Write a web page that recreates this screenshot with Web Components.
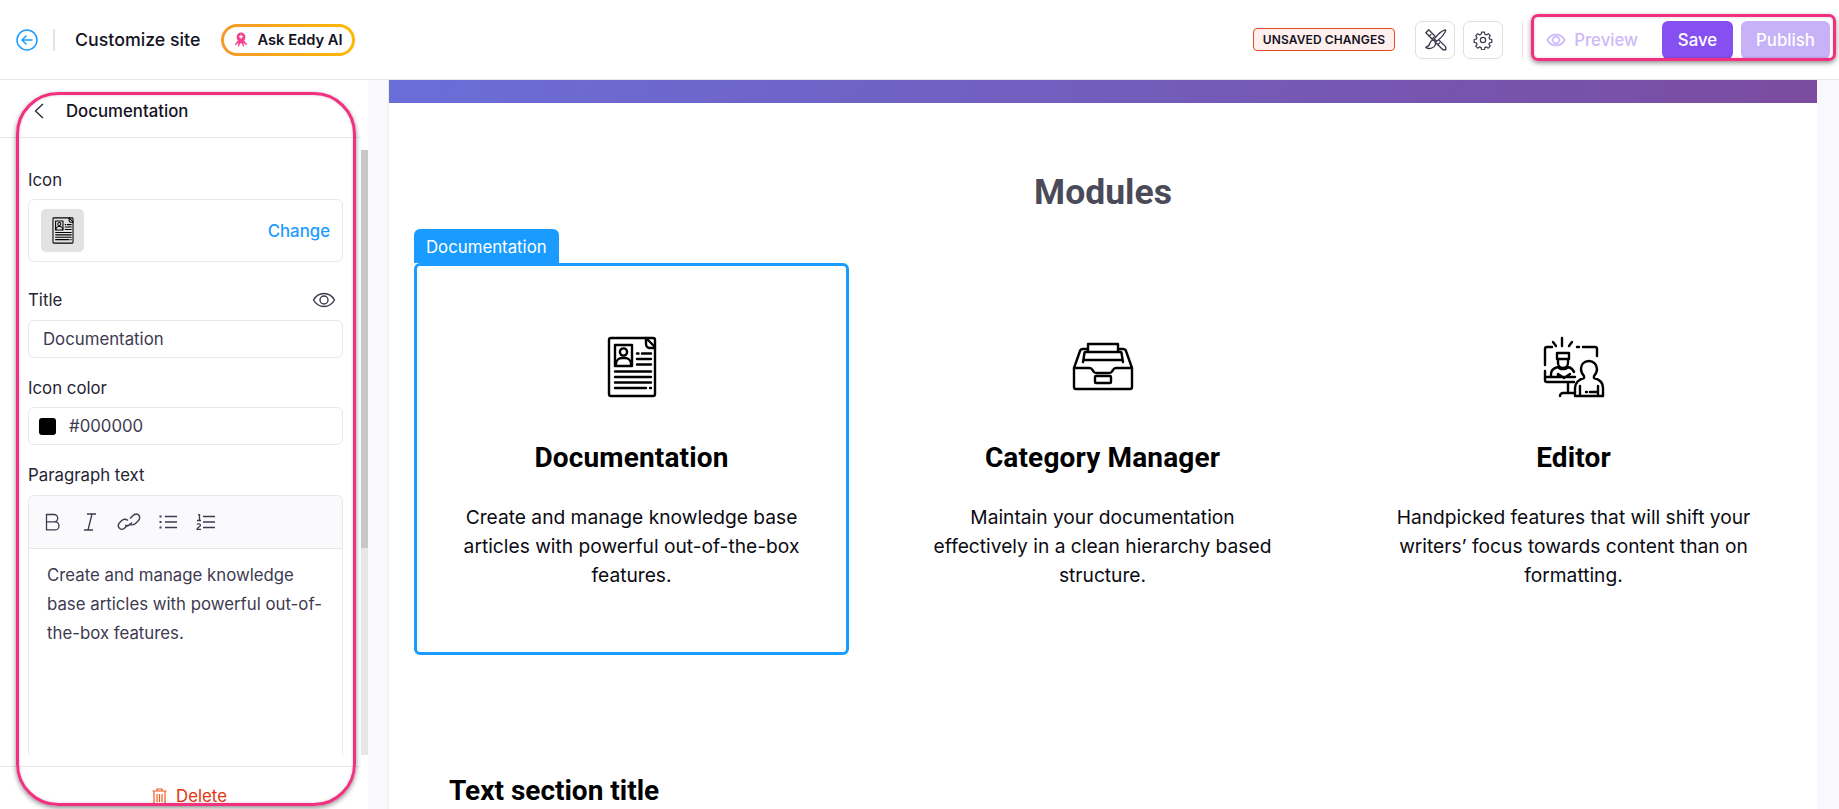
<!DOCTYPE html>
<html lang="en"><head><meta charset="utf-8"><title>Customize site</title>
<style>html,body{margin:0;height:100%;overflow:hidden;background:#fff;font-family:Inter,"Liberation Sans",sans-serif;color:#14121f}</style>
</head><body>
<site-customizer></site-customizer>
<script>
const ICONS={
doc:`<svg width="50" height="62" viewBox="17 16 50 62" fill="none" stroke="#000" stroke-width="2.400" stroke-linecap="round" stroke-linejoin="round"><rect x="19" y="18" width="46" height="58" rx="2"/><path d="M56 18v6a4 4 0 0 0 4 4h5M57.500 19.500l7 7"/><rect x="25" y="25" width="17" height="21"/><circle cx="33.500" cy="32" r="3.600"/><path d="M26 45v-2a6 6 0 0 1 6-5h3a6 6 0 0 1 6 5v2M47 33.500h1.500M52 33.500h9M47 39h14M47 44.500h14M25 51.500h36M25 57h36M25 62.500h36M25 68h31M60 68h1"/></svg>`,
tray:`<svg width="62" height="50" viewBox="13 17 62 50" fill="none" stroke="#000" stroke-width="2.400" stroke-linecap="round" stroke-linejoin="round"><path d="M15 43h15.500c1.500 0 2.500 1 3 2l1 1.500c.5 1 1.500 1.500 3 1.500h12.500c1.500 0 2.500-.5 3-1.500l1-1.500c.5-1 1.500-2 3-2H73v19a2 2 0 0 1-2 2H17a2 2 0 0 1-2-2z"/><path d="M15 43l6-17c.5-1.500 1.500-2 3-2h5M73 43l-6-17c-.5-1.500-1.500-2-3-2h-5M29 27v-8h30v8M24 37l1.500-9a1 1 0 0 1 1-1h35a1 1 0 0 1 1 1l1.500 9M26 35h36"/><rect x="36" y="51" width="16" height="7" rx="1"/></svg>`,
editor:`<svg width="62" height="62" viewBox="13 9 62 62" fill="none" stroke="#000" stroke-width="2.400" stroke-linecap="round" stroke-linejoin="round"><path d="M15 38V22a2 2 0 0 1 2-2h5M32 11v8M23 15l3 4M42 15l-3 4M47 20h2M53 20h12a2 2 0 0 1 2 2v7M15 44v9a2 2 0 0 0 2 2h27M16 50h29M38 55v10M30 69a3 3 0 0 1 3-3h11M28 50v-3l6 4 6-4M21 50v-3c0-4 3-6 7-7 1 1.500 3 2 5 2s4-.5 5-2c3 .8 5 2.500 6 5M27 26h12v6H27zM28 32v4c0 3 2.500 5 5 5s5-2 5-5v-4"/><path d="M54 49c-2-2-3-4-3-7 0-4.500 3-8 8-8 4.500 0 8 3.500 8 8 0 3-1.500 5.500-3 7v2c4 1 9 4 9 10v8H45v-8c0-5 4-9 9-10zM50 59v10M68 59v10M56 65h1M60 65h8"/></svg>`,
eye:(s,c,w=1.6)=>`<svg width="${s}" height="${s}" viewBox="0 0 24 24" fill="none" stroke="${c}" stroke-width="${w}"><path d="M1.500 12C4 7.500 7.500 5.500 12 5.500s8 2 10.500 6.500C20 16.500 16.500 18.500 12 18.500S4 16.500 1.500 12z"/><circle cx="12" cy="12" r="4"/></svg>`
};
function el(name,html){
  customElements.define(name,class extends HTMLElement{
    constructor(){super();this.attachShadow({mode:'open'}).innerHTML=typeof html==='function'?html(this):html;}
  });
}
const DESC={d:'Create and manage knowledge base articles with powerful out-of-the-box features.',
c:'Maintain your documentation effectively in a clean hierarchy based structure.',
e:'Handpicked features that will shift your writers’ focus towards content than on formatting.'};

el('eddy-pill',`<style>:host{display:inline-flex;align-items:center;gap:9px;box-sizing:border-box;height:32px;width:134px;padding:0 0 0 10px;border-radius:16px;border:3px solid transparent;
background:linear-gradient(#fff,#fff) padding-box,linear-gradient(90deg,#f39a2e,#ffb800) border-box;font:600 14.700px Inter,sans-serif;color:#14121f;white-space:nowrap}</style>
<svg width="14" height="17" viewBox="0 0 16 18" fill="#f2418e"><path d="M8 1a5 5 0 0 0-5 5c0 2 .8 3.200 1.500 4.200L1 14.500l1 1 3.200-2.800L4.400 17h1.300L7 13.500h2l1.300 3.500h1.300l-.8-4.300 3.200 2.800 1-1-3.500-4.300c.7-1 1.500-2.200 1.500-4.200a5 5 0 0 0-5-5z"/><path d="M8 3.500v4.500M5.800 5.700h4.400" stroke="#fff" stroke-width="1.300"/></svg>Ask Eddy AI`);

el('icon-btn',`<style>:host{display:flex;align-items:center;justify-content:center;width:40px;height:38px;box-sizing:border-box;border:1px solid #dedede;border-radius:7px;background:#fff}</style><slot></slot>`);

el('top-bar',`<style>
:host{display:flex;align-items:center;height:79px;border-bottom:1px solid #e8e8e8;box-sizing:content-box;padding:0 9px 0 16px;background:#fff;position:relative;flex:none}
.div{width:2px;height:22px;background:#e3e3e3;margin:0 20px 0 15px}
.t{font:500 17.800px Inter,sans-serif;color:#14121f;margin-right:21px}
.sp{flex:1}
.badge{box-sizing:border-box;height:23px;padding:0 9px;display:flex;align-items:center;border:1px solid #e0492a;border-radius:4px;background:#fff0ee;font:600 12px Inter,sans-serif;letter-spacing:.1px;margin-right:20px;color:#14121f}
.g{display:flex;gap:8px;padding:0 19px 0 0;border-right:1px solid #e6e6e6;margin-right:23px;height:38px}
.pv{display:flex;align-items:center;gap:8px;font:500 16.800px Inter,sans-serif;color:#cdb9f8;margin-right:24px}
.btn{height:38px;display:flex;align-items:center;justify-content:center;border-radius:6px;font:500 16.800px Inter,sans-serif;color:#fff;box-sizing:border-box}
.save{width:71px;background:#864ff0;margin-right:8px}
.pub{width:89px;background:#c7b1f7}
.mark{position:absolute;left:1531px;top:14px;width:305px;height:47px;box-sizing:border-box;border:3px solid #f2307f;border-radius:7px;box-shadow:0 2px 5px rgba(0,0,0,.45),inset 0 0 3px rgba(0,0,0,.2)}
</style>
<svg width="22" height="22" viewBox="0 0 22 22" fill="none" stroke="#1a9bff" stroke-width="1.500" stroke-linecap="round" stroke-linejoin="round"><circle cx="11" cy="11" r="10"/><path d="M16 11H6M10 7l-4 4 4 4"/></svg>
<span class="div"></span><span class="t">Customize site</span><eddy-pill></eddy-pill><span class="sp"></span>
<span class="badge">UNSAVED CHANGES</span>
<div class="g"><icon-btn><svg width="25" height="25" viewBox="0 0 22 22" fill="none" stroke="#3d3a50" stroke-width="1.200" stroke-linejoin="round" stroke-linecap="round"><path d="M2.500 5l2.500-2.500 15 15V20h-2.500z"/><path d="M5.500 8l1.500-1.500M8 10.500l1.500-1.500M13 15.500l1.500-1.500"/><path d="M19.500 2.500c-3 .8-7 4.500-9.500 8l2 2c3.500-2.500 7-6.500 8-9.500z" fill="#fff"/><path d="M9.500 11.500c-2 0-3 1-3.500 3-.3 1.500-1.500 2.800-3.500 3.500 3 2 7.500.5 8.500-2.500.4-1.500 0-2.500-1.500-4z" fill="#fff"/></svg></icon-btn>
<icon-btn><svg width="20" height="20" viewBox="0 0 24 24" fill="none" stroke="#3d3a50" stroke-width="1.500" stroke-linejoin="round"><circle cx="12" cy="12" r="3.200"/><path d="M10.300 2.500h3.400l.5 2.600 1.900.8 2.200-1.500 2.400 2.400-1.500 2.200.8 1.900 2.600.5v3.400l-2.600.5-.8 1.900 1.500 2.200-2.400 2.400-2.200-1.500-1.900.8-.5 2.600h-3.400l-.5-2.600-1.900-.8-2.200 1.500-2.400-2.400 1.500-2.200-.8-1.900-2.600-.5v-3.400l2.600-.5.8-1.900-1.500-2.200 2.400-2.400 2.200 1.500 1.900-.8z"/></svg></icon-btn></div>
<span class="pv">${ICONS.eye(20,'#cdb9f8',2)}Preview</span><span class="btn save">Save</span><span class="btn pub">Publish</span>
<div class="mark"></div>`);

el('field-box',`<style>:host{display:flex;align-items:center;box-sizing:border-box;border:1px solid #e8e8ec;border-radius:6px;background:#fff;font:400 16.800px Inter,sans-serif;color:#3d3a50;height:38px;padding:0 14px}</style><slot></slot>`);

el('rich-editor',`<style>:host{display:block;box-sizing:border-box;border:1px solid #e8e8ec;border-bottom:0;border-radius:6px 6px 0 0;height:261px}
.tb{display:flex;align-items:center;height:52px;background:#fafafc;border-bottom:1px solid #e8e8ec;border-radius:6px 6px 0 0;padding-left:16px}
.tb svg{display:block}
.c{padding:12px 18px;font:400 16.800px/29px Inter,sans-serif;color:#3d3a50}</style>
<div class="tb">
<svg width="16" height="18" viewBox="0 0 16 18" fill="none" stroke="#3d3a50" stroke-width="1.300" style="margin-right:21px"><path d="M1.500 1.500H9a3.700 3.700 0 0 1 0 7.400H1.500zM1.500 8.900H10a4 4 0 0 1 0 8H1.500z"/></svg>
<svg width="16" height="18" viewBox="0 0 16 18" fill="none" stroke="#3d3a50" stroke-width="1.300" style="margin-right:19px"><path d="M5 1h9M2 17h9M10 1L6 17"/></svg>
<svg width="24" height="18" viewBox="0 0 24 18" fill="none" stroke="#3d3a50" stroke-width="1.400" style="margin-right:18px"><path d="M11 7.500c-2-1.500-4.500-1.500-6.500.3l-1.500 1.500c-2 2-2 4.500-.5 6s4 1 5.800-.8l2.500-2.500"/><path d="M12 11c2 1.500 5 1 6.500-.5L21 8c2-2 2.200-4.500.6-6s-4-1-5.800.8L13 5.500"/><path d="M8 12c1.500 1 3.500 1 5-.5l2-2"/></svg>
<svg width="18" height="14" viewBox="0 0 18 14" fill="none" stroke="#3d3a50" stroke-width="1.400" style="margin-right:19px"><path d="M6 1.500h12M6 7h12M6 12.500h12"/><path d="M.5 1.500h2M.5 7h2M.5 12.500h2" stroke-width="2"/></svg>
<svg width="19" height="16" viewBox="0 0 19 16" fill="none" stroke="#3d3a50" stroke-width="1.300"><path d="M7 2.500h12M7 8h12M7 13.500h12M2 1l1.500-.5V6M1 6.500h4M1 10.500c.5-1 3.500-1 3.500.8 0 1.200-3.500 2.500-3.500 4h4"/></svg>
</div><div class="c"><slot></slot></div>`);

el('side-panel',`<style>
:host{display:flex;flex-direction:column;width:368px;height:100%;background:#fff;position:relative;flex:none;box-sizing:border-box}
.head{display:flex;align-items:center;height:58px;border-bottom:1px solid #e8e8ec;padding:5px 0 0 34px;margin-right:7px;flex:none;box-sizing:border-box;font:500 16.800px Inter,sans-serif;color:#14121f}
.head svg{margin-right:22px}
.body{height:617px;overflow:hidden;padding:32px 25px 0 28px;box-sizing:border-box;flex:none}
.l{font:400 16.800px/20px Inter,sans-serif;color:#262433;display:flex;justify-content:space-between;align-items:center;margin-bottom:9px}
.l svg{margin:-2px 7px -2px 0}
.l.t2{margin-bottom:10px}
.icon{height:63px!important;justify-content:space-between;padding:0 12px!important;margin-bottom:28px}
.thumb{width:43px;height:43px;border-radius:5px;background:#e2e2e2;display:flex;align-items:center;justify-content:center}
.thumb svg{width:22px;height:27px}
.change{font:500 16.800px Inter,sans-serif;color:#1a9bff}
.f{margin-bottom:20px}
.sw{width:17px;height:17px;border-radius:3px;background:#000;margin:0 13px 0 -4px}
.foot{position:absolute;left:0;right:0;top:686px;margin-right:7px;border-top:1px solid #e8e8ec;height:43px;box-sizing:border-box;display:flex;justify-content:center;align-items:center;gap:9px;padding:16px 0 0 18px;font:400 16.800px Inter,sans-serif;color:#e0340f}
.track{position:absolute;right:0;top:70px;width:7px;height:605px;background:#e6e6e6}
.bar{position:absolute;right:0;top:70px;width:7px;height:398px;background:#c8c8c8}
.mark{position:absolute;left:16px;top:12px;width:340px;height:714px;box-sizing:border-box;border:3px solid #f2307f;border-radius:42px;box-shadow:0 2px 5px rgba(0,0,0,.45),inset 0 0 3px rgba(0,0,0,.2);pointer-events:none}
</style>
<div class="head"><svg width="10" height="16" viewBox="0 0 10 16" fill="none" stroke="#262433" stroke-width="1.300"><path d="M9 1L1.500 8 9 15"/></svg>Documentation</div>
<div class="body">
<div class="l">Icon</div>
<field-box class="icon"><span class="thumb">${ICONS.doc}</span><span class="change">Change</span></field-box>
<div class="l t2">Title ${ICONS.eye(24,'#3d3a50',1.400)}</div>
<field-box class="f">Documentation</field-box>
<div class="l">Icon color</div>
<field-box class="f"><span class="sw"></span>#000000</field-box>
<div class="l t2">Paragraph text</div>
<rich-editor>Create and manage knowledge base articles with powerful out-of-the-box features.</rich-editor>
</div>
<div class="foot"><svg width="15" height="17" viewBox="0 0 15 17" fill="none" stroke="#f05a1e" stroke-width="1.200"><path d="M.5 3h14M5 3V1h5v2M2 3v12.500a1 1 0 0 0 1 1h9a1 1 0 0 0 1-1V3M5 6v8M7.500 6v8M10 6v8"/></svg>Delete</div>
<div class="track"></div><div class="bar"></div><div class="mark"></div>`);

el('module-card',h=>`<style>
:host{display:flex;flex-direction:column;align-items:center;box-sizing:border-box;height:392px;padding-top:69px;border:3px solid transparent;border-radius:6px;position:relative}
:host([active]){border-color:#1a9bff}
.ic{height:64px;display:flex;align-items:center;justify-content:center}
h3{margin:41px 0 0;font:700 28px/36px Roboto,sans-serif;color:#000;letter-spacing:.15px}
p{margin:27px 0 0;width:358px;text-align:center;font:400 19.200px/29px Inter,sans-serif;color:#0b0b12}
.tab{position:absolute;left:-3px;top:-37px;height:34px;padding:2px 12px 0;box-sizing:border-box;display:flex;align-items:center;background:#1a9bff;color:#fff;border-radius:6px 6px 0 0;font:400 16.800px Inter,sans-serif}
</style>${h.hasAttribute('active')?'<div class="tab">Documentation</div>':''}
<div class="ic">${ICONS[h.getAttribute('icon')]}</div><h3>${h.getAttribute('heading')}</h3><p>${h.getAttribute('text')}</p>`);

el('canvas-pane',`<style>
:host{display:block;flex:1;background:#f9f9fd;padding:0 22px 0 20px;overflow:hidden;min-width:0}
.page{background:#fff;border-left:1px solid #eeeef2;height:100%;box-sizing:border-box}
.ban{height:23px;background:linear-gradient(100deg,#6a6ed8,#7b4ca0)}
.in{padding:0 25px}
h2{margin:0;padding-top:68px;text-align:center;font:700 35.500px/42px Roboto,sans-serif;color:#4a4a58;height:126px;box-sizing:border-box}
.grid{display:grid;grid-template-columns:repeat(3,435px);column-gap:36px}
h4{margin:118px 0 0 35px;font:700 28px/36px Roboto,sans-serif;color:#000}
</style><div class="page"><div class="ban"></div><div class="in"><h2>Modules</h2>
<div style="height:34px"></div>
<div class="grid">
<module-card active icon="doc" heading="Documentation" text="${DESC.d}"></module-card>
<module-card icon="tray" heading="Category Manager" text="${DESC.c}"></module-card>
<module-card icon="editor" heading="Editor" text="${DESC.e}"></module-card>
</div><h4>Text section title</h4></div></div>`);

el('site-customizer',`<style>:host{display:flex;flex-direction:column;height:100vh}.m{display:flex;flex:1;min-height:0}</style><top-bar></top-bar><div class="m"><side-panel></side-panel><canvas-pane></canvas-pane></div>`);
</script>
</body></html>
